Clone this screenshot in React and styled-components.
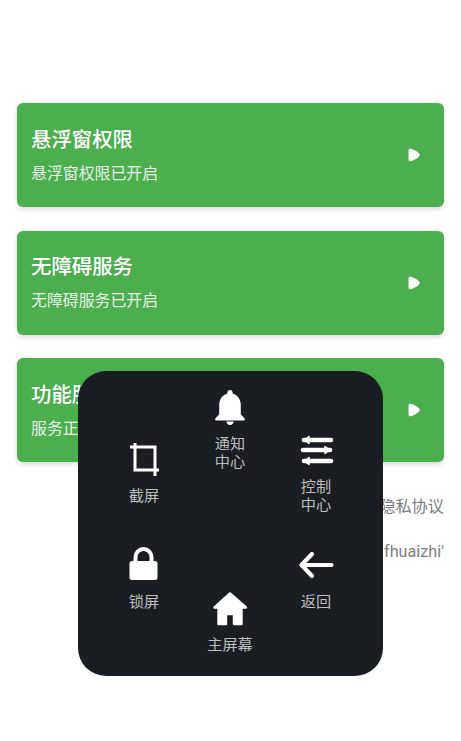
import React from "react";
import styled, { createGlobalStyle } from "styled-components";

const Global = createGlobalStyle`
  html, body {
    margin: 0;
    padding: 0;
    background: #fff;
    font-family: "Roboto", "Noto Sans CJK SC", sans-serif;
  }
`;

const Page = styled.div`
  position: relative;
  width: 461px;
  height: 741px;
  overflow: hidden;
  padding: 103px 17px 0;
  box-sizing: border-box;
`;

const CardList = styled.div`
  display: flex;
  flex-direction: column;
  gap: 23.5px;
`;

const Card = styled.div`
  height: 104px;
  box-sizing: border-box;
  padding: 0 24px 0 14px;
  background: #4bae4f;
  border-radius: 6px;
  box-shadow: 0 2px 5px rgba(0, 0, 0, 0.16);
  display: flex;
  align-items: center;
  justify-content: space-between;
  color: #fff;
`;

const CardText = styled.div`
  display: flex;
  flex-direction: column;
  gap: 10px;
  padding-top: 1px;
`;

const CardTitle = styled.div`
  font-size: 20.4px;
  line-height: 26px;
  font-weight: 500;
`;

const CardSub = styled.div`
  font-size: 15.9px;
  line-height: 22px;
  color: #e6f3e6;
`;

const Links = styled.div`
  margin-top: 33px;
  display: flex;
  flex-direction: column;
  gap: 21px;
  align-items: flex-end;
`;

const LinkRow = styled.div`
  font-size: 16.2px;
  line-height: 24px;
  color: #7d7d7d;
  white-space: nowrap;
`;

const Panel = styled.div`
  position: absolute;
  left: 78px;
  top: 371px;
  width: 305px;
  height: 305px;
  box-sizing: border-box;
  background: #1a1d21;
  border-radius: 28px;
  padding: 0 23px;
  display: grid;
  grid-template-columns: repeat(3, 86px);
`;

const PanelColumn = styled.div`
  display: flex;
  flex-direction: column;
  align-items: center;
  padding-top: ${(p) => p.$top}px;
  gap: ${(p) => p.$gap}px;
`;

const Item = styled.div`
  display: flex;
  flex-direction: column;
  align-items: center;
  gap: 10px;
`;

const Label = styled.div`
  font-size: 15.2px;
  line-height: 18px;
  color: #bdbebf;
  text-align: center;
  max-width: ${(p) => (p.$wide ? 60 : 32)}px;
`;

const Icon = styled.svg`
  display: block;
  width: 36px;
  height: 36px;
  color: #fff;
`;

const Play = () => (
  <svg width="12" height="14" viewBox="0 0 12 14" fill="#fff">
    <path d="M0.5 2.5C0.5 1 1.6 0.5 3 0.8C6 1.6 11.8 4.8 11.8 7C11.8 9.2 6 12.4 3 13.2C1.6 13.5 0.5 13 0.5 11.5Z" />
  </svg>
);

const CropIcon = () => (
  <Icon viewBox="0 0 36 36" fill="none" stroke="currentColor" strokeWidth="3">
    <path d="M9 2V29H33" />
    <path d="M4 6H29V35" />
  </Icon>
);

const BellIcon = () => (
  <Icon viewBox="2 2 20 20" fill="currentColor">
    <path d="M12 22c1.1 0 2-.9 2-2h-4c0 1.1.9 2 2 2zm6-6v-5c0-3.07-1.63-5.64-4.5-6.32V4c0-.83-.67-1.5-1.5-1.5s-1.5.67-1.5 1.5v.68C7.64 5.36 6 7.92 6 11v5l-2 2.2c-.5.6-.2 1.3.5 1.3h15c.7 0 1-.7.5-1.3L18 16z" />
  </Icon>
);

const SlidersIcon = () => (
  <Icon viewBox="0 0 36 36" fill="currentColor" stroke="currentColor" strokeLinecap="round">
    <path d="M6 8H33M5 18H32M6 29H33" fill="none" strokeWidth="4.6" />
    <path d="M6 8L11 4.5V11.5Z" strokeWidth="1.5" strokeLinejoin="round" />
    <path d="M32 18L27 14.5V21.5Z" strokeWidth="1.5" strokeLinejoin="round" />
    <path d="M6 29L11 25.5V32.5Z" strokeWidth="1.5" strokeLinejoin="round" />
  </Icon>
);

const LockIcon = () => (
  <Icon viewBox="0 0 36 36" fill="none">
    <path d="M9.5 16V10a8 8 0 0 1 16 0V16" stroke="currentColor" strokeWidth="4" />
    <rect x="3.5" y="14" width="28" height="19" rx="2.5" fill="currentColor" />
  </Icon>
);

const BackIcon = () => (
  <Icon viewBox="0 0 36 36" fill="none" stroke="currentColor" strokeWidth="4.2" strokeLinecap="round" strokeLinejoin="round">
    <path d="M14 7L3.5 18L14 29" />
    <path d="M4 18H33.5" />
  </Icon>
);

const HomeIcon = () => (
  <Icon viewBox="0 0 36 36" fill="currentColor" stroke="currentColor" strokeWidth="2.4" strokeLinejoin="round">
    <path d="M18 3.5L34 17.5H29.5V34H22V24H14V34H6.5V17.5H2.5Z" />
  </Icon>
);

const cards = [
  { title: "悬浮窗权限", sub: "悬浮窗权限已开启" },
  { title: "无障碍服务", sub: "无障碍服务已开启" },
  { title: "功能服务", sub: "服务正在运行" },
];

const columns = [
  {
    top: 70,
    gap: 42,
    items: [
      { icon: <CropIcon />, label: "截屏" },
      { icon: <LockIcon />, label: "锁屏" },
    ],
  },
  {
    top: 18,
    gap: 119,
    items: [
      { icon: <BellIcon />, label: "通知中心" },
      { icon: <HomeIcon />, label: "主屏幕", wide: true },
    ],
  },
  {
    top: 61,
    gap: 33,
    items: [
      { icon: <SlidersIcon />, label: "控制中心" },
      { icon: <BackIcon />, label: "返回" },
    ],
  },
];

export default function App() {
  return (
    <Page>
      <Global />
      <CardList>
        {cards.map((card) => (
          <Card key={card.title}>
            <CardText>
              <CardTitle>{card.title}</CardTitle>
              <CardSub>{card.sub}</CardSub>
            </CardText>
            <Play />
          </Card>
        ))}
      </CardList>
      <Links>
        <LinkRow>隐私协议</LinkRow>
        <LinkRow>fhuaizhi'</LinkRow>
      </Links>
      <Panel>
        {columns.map((col, i) => (
          <PanelColumn key={i} $top={col.top} $gap={col.gap}>
            {col.items.map((item) => (
              <Item key={item.label}>
                {item.icon}
                <Label $wide={item.wide}>{item.label}</Label>
              </Item>
            ))}
          </PanelColumn>
        ))}
      </Panel>
    </Page>
  );
}
